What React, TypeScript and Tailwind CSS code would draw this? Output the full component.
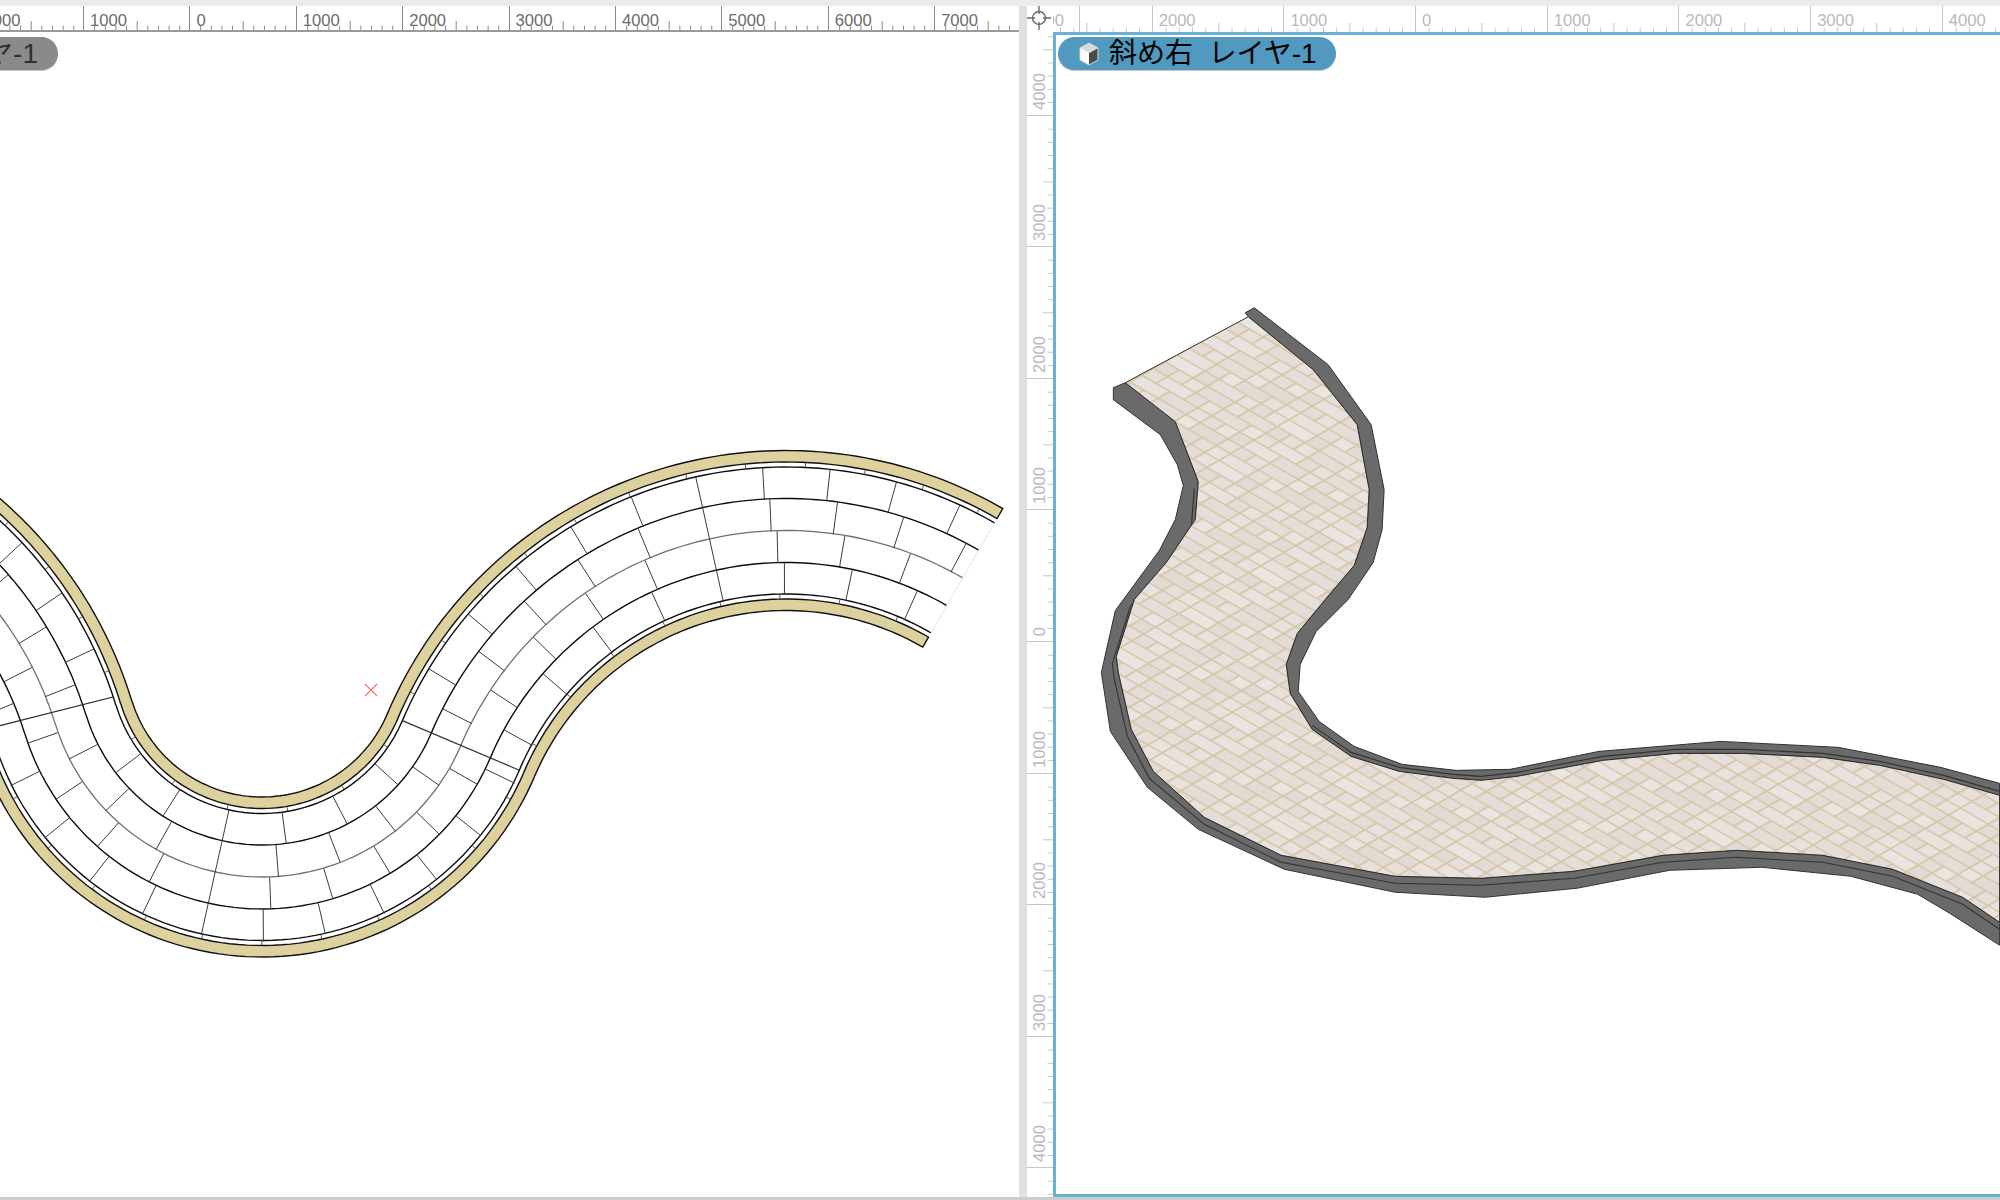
import React from "react";

type P = [number, number];
const rad = (d: number) => (d * Math.PI) / 180;

/* ---------- plan drawing geometry ---------- */
type Sec = { c: P; R: number; s: number; a0: number; a1: number };
const SECS: Sec[] = [
  { c: [-283, 827], R: 353.5, s: -1, a0: -75, a1: -17 },
  { c: [262, 661], R: 216, s: 1, a0: 163, a1: 23 },
  { c: [786, 884], R: 353.5, s: -1, a0: -157, a1: -60 },
];
const at = (sec: Sec, o: number, deg: number): P => {
  const r = sec.R + sec.s * o;
  return [sec.c[0] + r * Math.cos(rad(deg)), sec.c[1] + r * Math.sin(rad(deg))];
};
const line = (o: number): P[] => {
  const out: P[] = [];
  SECS.forEach((sec) => {
    for (let i = 0; i <= 80; i++) out.push(at(sec, o, sec.a0 + ((sec.a1 - sec.a0) * i) / 80));
  });
  return out;
};
const d = (pts: P[]) => "M" + pts.map((p) => p[0].toFixed(1) + " " + p[1].toFixed(1)).join("L");
const band = (o0: number, o1: number) => d([...line(o0), ...line(o1).reverse()]) + "Z";
const radial = (sec: Sec, o0: number, o1: number, deg: number) => d([at(sec, o0, deg), at(sec, o1, deg)]);

const joints: string[] = [];
const ticks: string[] = [];
for (let k = 0; k < 4; k++) {
  const o0 = -63.5 + 32 * k;
  const o1 = o0 + 32;
  const om = (o0 + o1) / 2;
  SECS.forEach((sec, si) => {
    const r = sec.R + sec.s * om;
    const lo = Math.min(sec.a0, sec.a1) + 1;
    const hi = Math.max(sec.a0, sec.a1) - 1;
    const step = (([62, 59, 65][si] / r) * 180) / Math.PI;
    const ref = si === 0 ? -17 - ((k % 2 ? 30 : 58) / r) * (180 / Math.PI) : si === 1 ? 102.5 : -102.5;
    for (let n = -30; n <= 30; n++) {
      const a = ref + n * step;
      if (a > lo && a < hi) joints.push(radial(sec, o0, o1, a));
    }
  });
}
SECS.forEach((sec) => {
  [-1, 1].forEach((side) => {
    const r = sec.R + sec.s * side * 66;
    const step = ((60 / r) * 180) / Math.PI;
    const lo = Math.min(sec.a0, sec.a1);
    const hi = Math.max(sec.a0, sec.a1);
    for (let a = lo + step / 2; a < hi; a += step) ticks.push(radial(sec, side * 63.5, side * 68.5, a));
  });
});

function PlanDrawing() {
  return (
    <svg className="block w-full h-full" viewBox="0 32 1019 1165" fill="none">
      <path d={band(-80, -68.5)} fill="#ddd29d" stroke="#111" strokeWidth="1.4" />
      <path d={band(68.5, 80)} fill="#ddd29d" stroke="#111" strokeWidth="1.4" />
      {[-63.5, -32, 32, 63.5].map((o) => (
        <path key={o} d={d(line(o))} stroke="#0c0c0c" strokeWidth="1.4" />
      ))}
      <path d={d(line(0))} stroke="#707070" strokeWidth="1.3" />
      <path d={joints.join("")} stroke="#3c3c3c" strokeWidth="1" />
      <path d={ticks.join("")} stroke="#444" strokeWidth="0.9" />
      <path d="M-5 727L113 697" stroke="#222" strokeWidth="1.2" />
      <path d={radial(SECS[1], -63.5, 63.5, 23)} stroke="#333" strokeWidth="1.2" />
      <path d={radial(SECS[2], -63.5, 63.5, -60)} stroke="#e6e6e6" strokeWidth="1" />
      <path d="M365 684l12 12M377 684l-12 12" stroke="#ff6b70" strokeWidth="1.1" />
    </svg>
  );
}

/* ---------- isometric drawing geometry ---------- */
const A: P[] = [[1245,313],[1254,308],[1328,365],[1371,425],[1384,490],[1382,530],[1373,563],[1348,600],[1316,632],[1300,665],[1298,692],[1319,722],[1354,747],[1402,765],[1456,771],[1510,770],[1599,752],[1721,742],[1839,748],[1941,768],[2000,784]];
const B: P[] = [[1248,317],[1313,370],[1357,425],[1369,490],[1367,528],[1354,566],[1325,600],[1297,634],[1286,665],[1290,694],[1312,730],[1351,757],[1399,772],[1453,779],[1481,781],[1517,777],[1603,761],[1676,754],[1743,754],[1823,758],[1880,766],[1944,780],[2000,796]];
const C: P[] = [[1125,383],[1175,422],[1198,482],[1195,520],[1166,563],[1134,600],[1116,657],[1118,673],[1131,730],[1153,772],[1204,818],[1281,856],[1395,877],[1481,879],[1574,872],[1663,856],[1737,851],[1823,856],[1893,870],[1963,898],[2000,923]];
const D: P[] = [[1113,388],[1113,400],[1160,435],[1177,465],[1183,486],[1175,520],[1159,551],[1115,611],[1101,673],[1110,732],[1147,788],[1198,830],[1284,870],[1395,893],[1485,898],[1577,889],[1670,871],[1762,868],[1851,877],[1918,895],[1950,914],[2000,946]];
const mid = C.slice(2).map((p): P => [p[0] - (p[0] < 1200 ? 4 : 0), p[1] + 7]);
const midTop = B.slice(10).map((p): P => [p[0], p[1] - 4]);

const ROWS: number[][] = [
  [2, 1, 1, 2, 1, 1],
  [1, 1, 2, 1, 2, 1],
  [2, 2, 1, 1, 1, 1],
  [1, 2, 1, 1, 2, 1],
  [1, 1, 1, 2, 1, 2],
  [2, 1, 2, 1, 1, 1],
];
const SHADES = ["#e8e1dd", "#e5ddd8", "#ebe5e2", "#e2dad4", "#e7dfda", "#e9e3df", "#e4dcd6"];

function Bricks() {
  let n = 0;
  return (
    <pattern id="bricks" patternUnits="userSpaceOnUse" width="8" height="6" patternTransform="matrix(14 8.1 11.7 -6.8 0 0)">
      {ROWS.map((row, y) => {
        let x = 0;
        return row.map((w) => {
          const el = <rect key={`${y}-${x}`} x={x} y={y} width={w} height={1} fill={SHADES[n++ % SHADES.length]} stroke="#d6c6a8" strokeWidth="0.12" />;
          x += w;
          return el;
        });
      })}
    </pattern>
  );
}

function IsoDrawing() {
  return (
    <svg className="block w-full h-full" viewBox="1056 35 944 1160" fill="none">
      <defs>
        <Bricks />
      </defs>
      <path d={d([...A, ...[...B].reverse()]) + "Z"} fill="#6a6a6a" stroke="#2f2f2f" strokeWidth="1" strokeLinejoin="round" />
      <path d={d([...D, ...[...C].reverse()]) + "Z"} fill="#6a6a6a" stroke="#333" strokeWidth="1" strokeLinejoin="round" />
      <path d={d(mid)} stroke="#333" strokeWidth="1.1" />
      <path d={d(midTop)} stroke="#333" strokeWidth="1.1" />
      <path d={d([...B, [2000, 923], ...[...C].reverse()]) + "Z"} fill="url(#bricks)" stroke="#2b2b2b" strokeWidth="1" strokeLinejoin="round" />
    </svg>
  );
}

/* ---------- rulers ---------- */
const FONT = "font-['Liberation_Sans','Noto_Sans_CJK_JP',sans-serif]";

function HTicks({ step, color, h }: { step: number; color: string; h: number }) {
  return (
    <svg className="absolute left-0 bottom-0" width={step * 10} height={h} fill="none">
      {Array.from({ length: 9 }, (_, i) => {
        const x = step * (i + 1);
        return <line key={i} x1={x} x2={x} y1={i === 4 ? h - 9 : h - 4.5} y2={h} stroke={color} strokeWidth="1" />;
      })}
    </svg>
  );
}

function HRuler({ labels, w, step, dark, className }: { labels: string[]; w: string; step: number; dark: boolean; className?: string }) {
  const border = dark ? "border-[#8a8a8a]" : "border-[#c6c6c6]";
  const text = dark ? "text-[#6c6c6c]" : "text-[#b9b9b9]";
  return (
    <div className={"flex h-full " + (className ?? "")}>
      {labels.map((l, i) => (
        <div key={i} className={`relative flex-none h-full border-l ${border} ${w} pl-[6px] pt-[5px] ${text} text-[16.6px] leading-[20px]`}>
          {l}
          <HTicks step={step} color={dark ? "#8a8a8a" : "#c6c6c6"} h={12} />
        </div>
      ))}
    </div>
  );
}

function VRuler() {
  const labels = ["4000", "3000", "2000", "1000", "0", "1000", "2000", "3000", "4000", ""];
  return (
    <div className="w-[26px] flex-none overflow-hidden bg-white">
      <div className="mt-[-48px] flex flex-col">
        {labels.map((l, i) => (
          <div key={i} className="relative flex-none h-[131.6px] border-b border-[#c6c6c6] flex items-end pb-[5px] pl-[4px]">
            <span className="[writing-mode:vertical-rl] rotate-180 text-[#b9b9b9] text-[16.6px] leading-[18px]">{l}</span>
            <svg className="absolute right-0 top-0" width="11" height="131" fill="none">
              {Array.from({ length: 9 }, (_, j) => {
                const y = 13.16 * (j + 1);
                return <line key={j} x1={j === 4 ? 1 : 5.5} x2="11" y1={y} y2={y} stroke="#c6c6c6" strokeWidth="1" />;
              })}
            </svg>
          </div>
        ))}
      </div>
    </div>
  );
}

function CubeIcon() {
  return (
    <svg width="20" height="24" viewBox="0 0 20 24" className="flex-none">
      <path d="M10 1L19 6v12l-9 5-9-5V6z" fill="#f4f4f4" stroke="#c9d3da" strokeWidth="1" />
      <path d="M10 11l8.5-4.8v11.5L10 22.4z" fill="#4b4b4b" />
      <path d="M10 1.5l8.5 4.7L10 11 1.5 6.2z" fill="#d8d8d8" />
      <path d="M10 11v11.4L1.5 17.7V6.2z" fill="#fafafa" />
    </svg>
  );
}

function Crosshair() {
  return (
    <svg width="26" height="26" viewBox="0 0 26 26" fill="none" stroke="#6a6a6a" strokeWidth="1.4">
      <circle cx="12" cy="12" r="6.5" />
      <path d="M12 0v8M12 16v8M0 12h8M16 12h8" />
    </svg>
  );
}

export default function App() {
  return (
    <div className={`w-[2000px] h-[1200px] overflow-hidden flex flex-col bg-white ${FONT}`}>
      <div className="h-[6px] flex-none bg-[#ebebeb]" />
      <div className="flex-1 flex min-h-0">
        {/* left pane */}
        <div className="w-[1019px] flex-none flex flex-col">
          <div className="h-[26px] flex-none overflow-hidden border-b-2 border-[#9a9a9a]">
            <HRuler className="ml-[-23.4px]" labels={["2000", "1000", "0", "1000", "2000", "3000", "4000", "5000", "6000", "7000"]} w="w-[106.4px]" step={10.64} dark />
          </div>
          <div className="relative flex-1 min-h-0 overflow-hidden">
            <PlanDrawing />
            <div className="absolute top-[5px] left-[-120px] w-[178px] h-[33px] rounded-full bg-[#8a8a8a] shadow-[0_1px_0_#c8c8c8] flex items-center justify-end pr-[20px] text-[#2f2f2f] text-[28px] whitespace-pre">
              レイヤ-1
            </div>
          </div>
        </div>
        {/* divider */}
        <div className="w-[8px] flex-none bg-[#e0e0e0]" />
        {/* right pane */}
        <div className="flex-1 flex flex-col min-w-0">
          <div className="h-[26px] flex-none flex">
            <div className="w-[26px] flex-none bg-white z-10">
              <Crosshair />
            </div>
            <div className="flex-1 overflow-hidden relative">
              <HRuler className="ml-[-33px]" labels={["3000", "2000", "1000", "0", "1000", "2000", "3000", "4000"]} w="w-[131.7px]" step={13.17} dark={false} />
              <div className="absolute top-0 bottom-0 left-[26px] w-px bg-[#c6c6c6]" />
            </div>
          </div>
          <div className="flex-1 flex min-h-0">
            <VRuler />
            <div className="relative flex-1 min-w-0 border-l-[3px] border-t-[3px] border-b-[3px] border-[#69b1d6]">
              <IsoDrawing />
              <div className="absolute top-[2px] left-[2px] w-[278px] h-[33px] rounded-full bg-[#5299bf] shadow-[0_1px_0_#c8c8c8] flex items-center pl-[21px] gap-[10px] text-black text-[28px] whitespace-pre">
                <CubeIcon />
                <span>斜め右  レイヤ-1</span>
              </div>
            </div>
          </div>
        </div>
      </div>
      <div className="h-[3px] flex-none bg-[#cccccc]" />
    </div>
  );
}
